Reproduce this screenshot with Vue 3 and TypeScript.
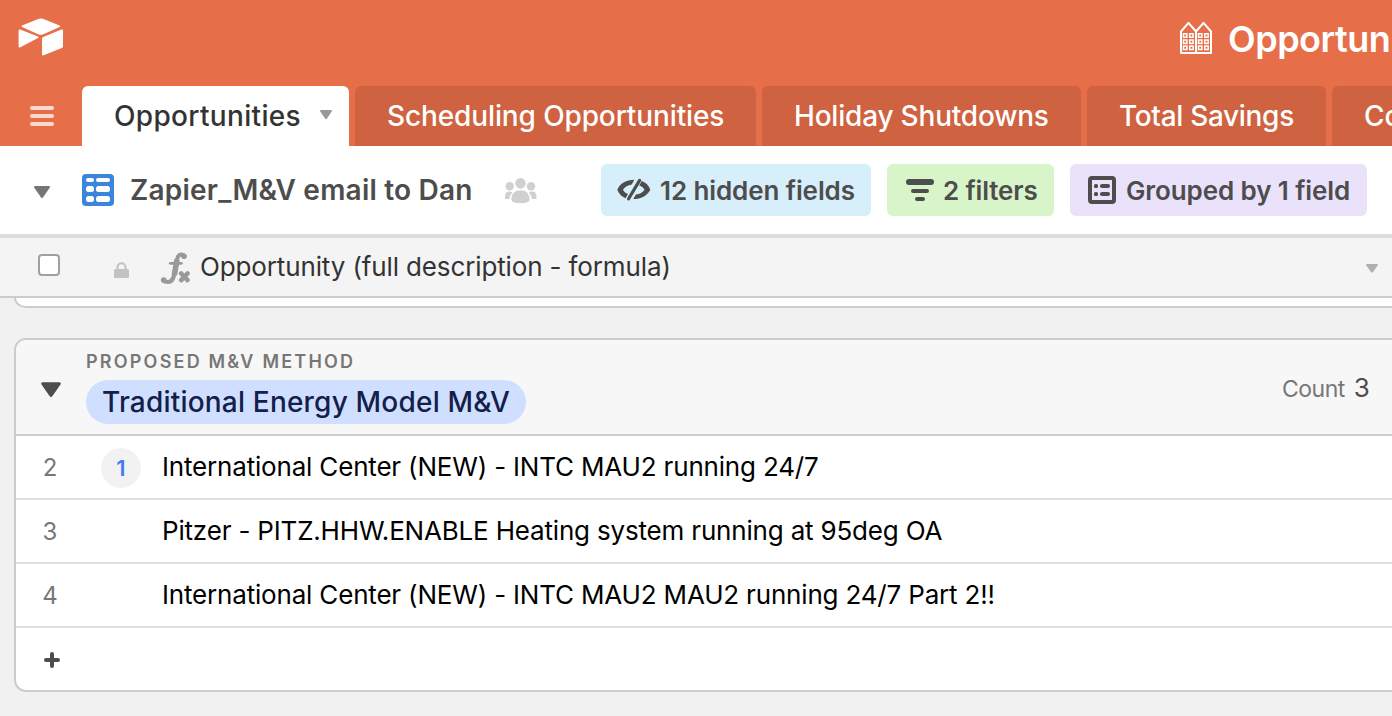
<script setup lang="ts">
interface Tab {
  label: string
  key: string
  active?: boolean
}
interface Row {
  num: number
  text: string
  key: string
  comments?: number
}

const tabs: Tab[] = [
  { label: 'Opportunities', key: 'opportunities', active: true },
  { label: 'Scheduling Opportunities', key: 'scheduling' },
  { label: 'Holiday Shutdowns', key: 'holiday' },
  { label: 'Total Savings', key: 'savings' },
  { label: 'Contacts', key: 'contacts' },
]

const rows: Row[] = [
  { num: 2, key: 'r2', comments: 1, text: 'International Center (NEW) - INTC MAU2 running 24/7' },
  { num: 3, key: 'r3', text: 'Pitzer - PITZ.HHW.ENABLE Heating system running at 95deg OA' },
  { num: 4, key: 'r4', text: 'International Center (NEW) - INTC MAU2 MAU2 running 24/7 Part 2!!' },
]

const windowRows = [12.8, 19, 25.1]
const windowCols = [3.5, 9.7, 18.5, 24.8]
</script>

<template>
  <div class="app">
    <header class="top">
      <div class="brand-bar">
        <svg class="logo" width="46" height="40" viewBox="0 0 46 40">
          <path d="M20.8 .8q2-.8 4 0l16.800 6.600q1.300.7 0 1.500L24.800 16.400q-2 .8-4 0L4 9q-1.300-.8 0-1.500z" />
          <path d="M.6 12.800q0-1.800 1.600-1.200l17.800 6.800q1.500.8 0 1.700L2.400 29.200q-1.800.8-1.800-1z" />
          <path d="M24 20.800q0-1.200 1.200-1.700L43.500 11.600q1.500-.4 1.500 1v15.800q0 1.100-1.200 1.600L25.700 37.300q-1.700.5-1.700-.9z" />
        </svg>
        <div class="base">
          <svg class="building" width="32" height="34" viewBox="0 0 32 34">
            <path class="line" d="M1 32V10.500L8.500 1.800 16 10.500 23.500 1.800 31 10.500V32zM16 10.500V32" />
            <template v-for="y in windowRows" :key="y">
              <rect v-for="x in windowCols" :key="x" class="pane" :x="x" :y="y" width="3.400" height="3.400" />
            </template>
          </svg>
          <span class="base-name">Opportunities</span>
        </div>
      </div>
      <nav class="tabs">
        <svg class="burger" width="24" height="20" viewBox="0 0 24 20">
          <rect width="24" height="4" rx="2" />
          <rect y="8" width="24" height="4" rx="2" />
          <rect y="16" width="24" height="4" rx="2" />
        </svg>
        <div v-for="t in tabs" :key="t.key" class="tab" :class="[t.key, { active: t.active }]">
          <span>{{ t.label }}</span>
          <svg v-if="t.active" class="tab-caret" width="12" height="10" viewBox="0 0 12 10">
            <path d="M1 0H11Q12.400.2 11.700 1.400L7 8.500Q6 9.800 5 8.500L.3 1.400Q-.4.2 1 0z" />
          </svg>
        </div>
      </nav>
    </header>

    <div class="viewbar">
      <svg class="view-caret" width="16" height="12" viewBox="0 0 16 12">
        <path d="M1.200 0H14.800Q16.500.2 15.700 1.700L9.300 11Q8 12.800 6.700 11L.3 1.700Q-.5.2 1.200 0z" />
      </svg>
      <svg class="grid-icon" width="32" height="32" viewBox="0 0 32 32">
        <rect width="32" height="32" rx="4" fill="#3b85da" />
        <g fill="#fff">
          <rect x="4" y="4" width="8" height="4" rx="2" />
          <rect x="14" y="4" width="14" height="4" rx="2" />
          <rect x="4" y="12" width="8" height="6" rx="2.500" />
          <rect x="14" y="12" width="14" height="6" rx="2.500" />
          <rect x="4" y="22" width="8" height="6" rx="2.500" />
          <rect x="14" y="22" width="14" height="6" rx="2.500" />
        </g>
      </svg>
      <span class="view-name">Zapier_M&amp;V email to Dan</span>
      <svg class="people" width="32" height="26" viewBox="0 0 32 26">
        <circle cx="15.500" cy="5.200" r="5.200" />
        <circle cx="4.700" cy="8.200" r="4.200" />
        <circle cx="26" cy="8.200" r="4.200" />
        <path d="M6.300 21.500C6.300 15.500 10.500 12.300 15.500 12.300S24.700 15.500 24.700 21.500Q24.700 25.200 15.500 25.200T6.300 21.500z" />
        <path d="M0 21V19Q0 13.600 4 13.600Q6 13.600 7.400 14.400Q4.600 17.200 4.400 21z" />
        <path d="M31.500 21V19Q31.500 13.600 27.300 13.600Q25.300 13.600 23.900 14.400Q26.500 17.200 26.700 21z" />
      </svg>

      <div class="pill hidden">
        <svg width="34" height="24" viewBox="0 0 34 24">
          <path d="M17.300 1.700C9 1.700 3 5.500 .3 11.700C1.800 15.500 4.800 18.800 8.600 20.200L11 16C8.500 15 6.800 13.500 6 11.700C8 8.700 10.800 7 14.800 6.400z" />
          <path d="M24.800 3C29 4.500 31.800 7.500 33.300 11.700C30 18 24 21 16.300 21L18.900 16.500C23 15.900 25.800 14.300 27.500 11.700C26.600 9.900 24.900 8.400 22.200 7.500z" />
          <path d="M22.600 2.400L11.600 20.800" fill="none" stroke="#4d4d4d" stroke-width="3.200" stroke-linecap="round" />
        </svg>
        <span>12 hidden fields</span>
      </div>
      <div class="pill filters">
        <svg width="28" height="22" viewBox="0 0 28 22">
          <rect width="28" height="6" rx="3" />
          <rect x="5" y="10" width="18" height="4" rx="2" />
          <rect x="9" y="18" width="10" height="4" rx="2" />
        </svg>
        <span>2 filters</span>
      </div>
      <div class="pill grouped">
        <svg width="28" height="28" viewBox="0 0 28 28">
          <rect x="2" y="2" width="24" height="24" rx="2" fill="none" stroke="#4d4d4d" stroke-width="4" />
          <rect x="6" y="8" width="4" height="4" rx="1.500" />
          <rect x="12" y="8" width="10" height="4" rx="2" />
          <rect x="6" y="16" width="4" height="4" rx="1.500" />
          <rect x="12" y="16" width="10" height="4" rx="2" />
        </svg>
        <span>Grouped by 1 field</span>
      </div>
    </div>

    <div class="colhead">
      <span class="checkbox"></span>
      <svg class="lock" width="15" height="16" viewBox="0 0 15 16">
        <path d="M3.500 8V5.200a4 4 0 0 1 8 0V8" fill="none" stroke="#c2c2c2" stroke-width="2" />
        <rect y="7" width="15" height="9" rx="1.500" fill="#c2c2c2" />
      </svg>
      <svg class="fx" width="30" height="33" viewBox="0 0 30 33">
        <g fill="none" stroke="#999" stroke-linecap="round">
          <path d="M24.300 4Q23 2.300 20.500 2.500Q17.800 3 16.800 8.500L14.200 22.500Q12.800 29.900 8 30Q4.500 30 3.200 28.600" stroke-width="4.200" />
          <path d="M17 7.500L14.400 23" stroke-width="5.600" stroke-linecap="butt" />
          <path d="M10.300 11.300H21.300" stroke-width="2.800" />
          <path d="M21.200 21.500L27.500 28.100M27.500 21.500L21.200 28.100" stroke-width="4.600" />
        </g>
        <circle cx="24" cy="4.300" r="2.800" fill="#999" />
        <circle cx="3.800" cy="28" r="2.800" fill="#999" />
      </svg>
      <span class="field-name">Opportunity (full description - formula)</span>
      <svg class="field-caret" width="12" height="9" viewBox="0 0 12 9">
        <path d="M1 0H11Q12.400.2 11.700 1.400L7 8Q6 9.300 5 8L.3 1.400Q-.4.2 1 0z" />
      </svg>
    </div>

    <main class="sheet">
      <div class="card previous"></div>
      <section class="card group">
        <div class="group-head">
          <svg class="group-caret" width="20" height="16" viewBox="0 0 20 16">
            <path d="M1.500.2H18.500Q20.500.6 19.500 2.400L11.500 14Q10 15.800 8.500 14L.5 2.400Q-.5.6 1.500.2z" />
          </svg>
          <div class="group-title">
            <span class="group-label">PROPOSED M&amp;V METHOD</span>
            <span class="token">Traditional Energy Model M&amp;V</span>
          </div>
          <div class="count"><span>Count</span><b>3</b></div>
        </div>
        <div v-for="r in rows" :key="r.key" class="row">
          <span class="num">{{ r.num }}</span>
          <span class="bubble-cell"><span v-if="r.comments" class="bubble">{{ r.comments }}</span></span>
          <span class="cell">{{ r.text }}</span>
        </div>
        <div class="row add">
          <svg width="16" height="16" viewBox="0 0 16 16">
            <path d="M8 2V14M2 8H14" />
          </svg>
        </div>
      </section>
    </main>
  </div>
</template>

<style>
body {
  margin: 0;
  overflow: hidden;
}
</style>

<style scoped>
.app {
  width: 1392px;
  height: 716px;
  overflow: hidden;
  display: flex;
  flex-direction: column;
  background: #f1f1f1;
  font-family: Inter, 'Liberation Sans', sans-serif;
  white-space: nowrap;
  color: #333;
}
svg {
  flex: none;
  display: block;
}
.top {
  height: 146px;
  background: #e66f4a;
  flex: none;
}
.brand-bar {
  height: 86px;
  display: flex;
  justify-content: space-between;
}
.logo {
  margin: 18px 0 0 18px;
  fill: #fff;
}
.base {
  width: 212px;
  display: flex;
  overflow: hidden;
}
.building {
  margin-top: 21px;
}
.line {
  fill: none;
  stroke: #fff;
  stroke-width: 2;
  stroke-linejoin: round;
}
.pane {
  fill: none;
  stroke: #fff;
  stroke-width: 1.5;
}
.base-name {
  margin-left: 16px;
  font-size: 36px;
  line-height: 78px;
  font-weight: 600;
  letter-spacing: -0.5px;
  color: #fff;
}
.tabs {
  height: 60px;
  display: flex;
  gap: 6px;
}
.burger {
  margin: 20px 16px 0 30px;
  fill: #fad8ce;
}
.tab {
  box-sizing: border-box;
  flex: none;
  height: 60px;
  padding-left: 32px;
  display: flex;
  border-radius: 6px 6px 0 0;
  background: #cf6240;
  color: #fff;
  font-size: 28px;
  line-height: 60px;
  font-weight: 500;
}
.tab.active {
  background: #fff;
  color: #333;
}
.opportunities { width: 267px; margin-left: 6px; letter-spacing: 0.33px; }
.scheduling { width: 401px; letter-spacing: -0.12px; }
.holiday { width: 319px; letter-spacing: -0.2px; }
.savings { width: 239px; letter-spacing: -0.32px; }
.contacts { width: 200px; }
.tab-caret {
  margin: 24px 17px 0 auto;
  fill: #999;
}
.viewbar {
  height: 88px;
  flex: none;
  background: #fff;
  border-bottom: 4px solid #ddd;
  display: flex;
  align-items: flex-start;
}
.view-caret {
  margin: 40px 0 0 34px;
  fill: #757575;
}
.grid-icon {
  margin: 28px 0 0 32px;
}
.view-name {
  width: 375px;
  margin-left: 16px;
  font-size: 28px;
  line-height: 88px;
  font-weight: 600;
  letter-spacing: 0.22px;
  color: #4d4d4d;
}
.people {
  margin: 32px 64px 0 0;
  fill: #d0d0d0;
}
.pill {
  box-sizing: border-box;
  flex: none;
  height: 52px;
  margin: 18px 16px 0 0;
  border-radius: 6px;
  display: flex;
  align-items: center;
  font-size: 26px;
  font-weight: 600;
  letter-spacing: -0.1px;
  color: #4d4d4d;
  fill: #4d4d4d;
}
.hidden {
  width: 270px;
  padding-left: 16px;
  gap: 9px;
  background: #d7eefb;
}
.filters {
  width: 167px;
  padding-left: 19px;
  gap: 9px;
  letter-spacing: -0.15px;
  background: #d8f5c9;
}
.grouped {
  width: 297px;
  padding-left: 18px;
  gap: 10px;
  background: #eae1fb;
}
.colhead {
  height: 58px;
  flex: none;
  background: #f4f4f4;
  border-bottom: 2px solid #ccc;
  display: flex;
  align-items: flex-start;
}
.checkbox {
  box-sizing: border-box;
  width: 22px;
  height: 22px;
  margin: 16px 0 0 38px;
  border: 2px solid #99a3a5;
  border-radius: 4px;
  background: #fff;
}
.lock {
  margin: 24px 0 0 54px;
}
.fx {
  margin: 14px 0 0 31px;
}
.field-name {
  margin-left: 10px;
  font-size: 26px;
  line-height: 58px;
  letter-spacing: -0.13px;
}
.field-caret {
  margin: 26px 14px 0 auto;
  fill: #b0b0b0;
}
.sheet {
  flex: 1;
  min-height: 0;
  padding-left: 14px;
}
.card {
  box-sizing: border-box;
  width: 1400px;
  border: 2px solid #ccc;
  background: #fff;
  overflow: hidden;
}
.previous {
  height: 10px;
  margin-bottom: 30px;
  border-top: 0;
  border-radius: 0 0 0 12px / 0 0 0 10px;
}
.group {
  height: 354px;
  border-radius: 12px;
}
.group-head {
  height: 94px;
  background: #f7f7f7;
  border-bottom: 2px solid #ccc;
  display: flex;
}
.group-caret {
  margin: 42px 0 0 25px;
  fill: #4d4d4d;
}
.group-title {
  margin-left: 25px;
  display: flex;
  flex-direction: column;
  align-items: flex-start;
}
.group-label {
  margin-top: 10px;
  height: 30px;
  font-size: 18px;
  line-height: 24px;
  font-weight: 600;
  letter-spacing: 2.2px;
  color: #777;
}
.token {
  box-sizing: border-box;
  width: 440px;
  height: 44px;
  padding-left: 16px;
  border-radius: 22px;
  background: #d0dfff;
  color: #13204a;
  font-size: 28px;
  line-height: 44px;
  font-weight: 500;
  letter-spacing: 0.2px;
}
.count {
  margin-left: auto;
  width: 130px;
  display: flex;
  align-items: baseline;
  line-height: 95px;
  font-size: 23px;
  letter-spacing: -0.5px;
  color: #777;
}
.count b {
  margin-left: 9px;
  font-size: 26px;
  font-weight: 400;
  color: #4d4d4d;
}
.row {
  height: 62px;
  border-bottom: 2px solid #dde1e3;
  display: flex;
  align-items: center;
  font-size: 26px;
  color: #111;
}
.cell {
  margin-top: -2px;
  letter-spacing: -0.18px;
  color: #000;
}
.num {
  width: 68px;
  text-align: center;
  font-size: 24px;
  color: #777;
}
.bubble-cell {
  width: 78px;
}
.bubble {
  display: block;
  width: 40px;
  height: 40px;
  margin: 2px 0 0 17px;
  border-radius: 50%;
  background: #f2f2f2;
  color: #447bf5;
  font-size: 22px;
  line-height: 40px;
  font-weight: 600;
  text-align: center;
}
.add {
  border-bottom: 0;
}
.add svg {
  margin: 2px 0 0 28px;
  fill: none;
  stroke: #4d4d4d;
  stroke-width: 4;
  stroke-linecap: round;
}
</style>
